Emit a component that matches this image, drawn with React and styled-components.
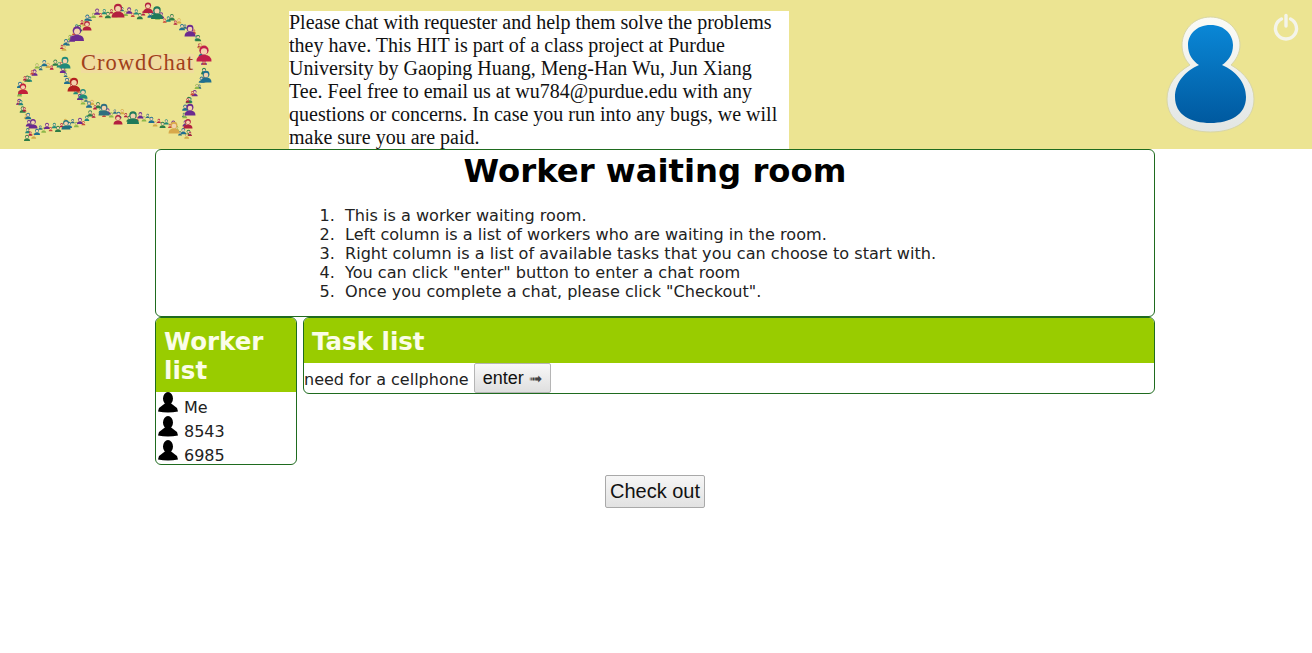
import styled, { createGlobalStyle } from "styled-components";

const GlobalStyle = createGlobalStyle`
html, body {
  margin: 0;
  padding: 0;
  background: #fff;
  font-family: "DejaVu Sans", Verdana, sans-serif;
}
`

const Header = styled.header`
height: 149px;
background: #ece492;
display: flex;
flex-direction: row;
align-items: flex-end;
`

const LogoBox = styled.div`
width: 289px;
height: 149px;
flex-shrink: 0;
`

const Note = styled.p`
width: 500px;
height: 138px;
margin: 0;
background: #fff;
font-family: "Liberation Serif", "Times New Roman", serif;
font-size: 20px;
line-height: 23px;
color: #111;
flex-shrink: 0;
`

const UserArea = styled.div`
flex: 1;
height: 149px;
display: flex;
flex-direction: row;
justify-content: flex-end;
align-items: flex-start;
padding-right: 12px;
gap: 15px;
`

const AvatarWrap = styled.div`
width: 94px;
height: 120px;
margin-top: 15px;
`

const PowerWrap = styled.div`
width: 28px;
height: 28px;
margin-top: 13px;
`

const Main = styled.main`
width: 1000px;
margin-left: 155px;
`

const Intro = styled.section`
box-sizing: border-box;
height: 168px;
border: 1px solid #1f6b1f;
border-radius: 6px;
`

const Title = styled.h1`
margin: 0;
padding-top: 1px;
text-align: center;
font-size: 32.3px;
line-height: 41px;
font-weight: 700;
color: #000;
`

const Steps = styled.ol`
margin: 14px 0 0 0;
padding-left: 189px;
font-size: 16.1px;
line-height: 19px;
color: #222;

li::marker {
  content: counter(list-item) ".  ";
}
`

const Columns = styled.div`
display: flex;
flex-direction: row;
align-items: flex-start;
gap: 6px;
`

const Panel = styled.section`
box-sizing: border-box;
border: 1px solid #1f6b1f;
border-radius: 6px;
overflow: hidden;
width: ${(p) => p.$width};
height: ${(p) => p.$height};
flex-shrink: 0;
`

const PanelTitle = styled.h2`
margin: 0;
padding: 9px 8px 7px;
background: #99cc00;
color: #fbfde8;
font-size: 24.5px;
line-height: 29px;
font-weight: 700;
`

const WorkerRow = styled.div`
display: flex;
flex-direction: row;
align-items: flex-start;
height: 24px;
padding-left: 2px;
gap: 6px;
font-size: 16px;
line-height: 19px;
color: #222;

span {
  padding-top: 6px;
}
`

const TaskRow = styled.div`
display: flex;
flex-direction: row;
align-items: center;
height: 30px;
font-size: 16px;
color: #222;

span.label {
  padding-top: 2px;
}
`

const EnterButton = styled.button`
box-sizing: border-box;
width: 77px;
height: 30px;
margin-left: 5px;
padding: 1px 0 0;
border: 1px solid #b5b5b5;
border-radius: 2px;
background: linear-gradient(#f8f8f8, #dfdfdf);
font-family: "Liberation Sans", Arial, sans-serif;
font-size: 18px;
color: #111;
`

const Arrow = styled.span`
font-size: 16px;
color: #444;
`

const Footer = styled.div`
display: flex;
justify-content: center;
margin-top: 10px;
`

const CheckoutButton = styled.button`
box-sizing: border-box;
width: 100px;
height: 33px;
padding: 0;
border: 1px solid #a9a9a9;
border-radius: 2px;
background: linear-gradient(#f6f6f6, #e2e2e2);
font-family: "Liberation Sans", Arial, sans-serif;
font-size: 20px;
color: #111;
`

const palette = ["#b3203f", "#1f8a7a", "#6b2a8f", "#2f6f7f", "#d2ac48", "#2d7d46", "#c9483a", "#8fb84a", "#1f6f8f"]

// points of the two speech bubbles, in logo pixels
const bigBubble = [[65, 50], [77, 33], [93, 16], [118, 12], [157, 14], [182, 23], [200, 37], [207, 57], [207, 80], [193, 97], [187, 113], [190, 128], [193, 136], [173, 125], [147, 118], [107, 112], [83, 97], [70, 78], [63, 63]]
const smallBubble = [[62, 63], [40, 68], [23, 87], [22, 103], [33, 120], [30, 136], [50, 128], [83, 122], [100, 113]]

const bigPeople = [
  [118, 11, 6.5, "#b3203f"], [157, 13, 6, "#1f7a5a"], [77, 34, 7, "#6b2a8f"], [204, 54, 7.5, "#c21f4a"],
  [206, 77, 5.5, "#1f6f8f"], [74, 85, 6.5, "#b3201f"], [133, 118, 6, "#1f7a5a"], [104, 110, 5.5, "#2f6f7f"],
  [190, 110, 5.5, "#6b2a8f"], [65, 63, 5.5, "#1f8a7a"], [23, 89, 5, "#c21f3a"], [174, 128, 5.5, "#d8a84a"],
  [148, 8, 5, "#b3203f"], [190, 31, 5.5, "#6b2a8f"], [87, 26, 4.5, "#b3203f"], [83, 94, 4.5, "#1f8a7a"],
  [118, 120, 4.5, "#b3203f"], [33, 124, 4.5, "#6b2a8f"], [66, 125, 4.5, "#1f6f7f"], [188, 124, 4.5, "#b3203f"],
]

function walk(points, step) {
  const out = []
  for (let i = 0; i < points.length - 1; i++) {
    const [x1, y1] = points[i]
    const [x2, y2] = points[i + 1]
    const n = Math.max(1, Math.round(Math.hypot(x2 - x1, y2 - y1) / step))
    for (let k = 0; k < n; k++) {
      const t = k / n
      out.push([x1 + (x2 - x1) * t, y1 + (y2 - y1) * t])
    }
  }
  return out
}

function Person({ x, y, r, color }) {
  return (
    <g fill={color}>
      <circle cx={x} cy={y - r * 0.5} r={r * 0.62} />
      <circle cx={x} cy={y - r * 0.35} r={r * 0.42} fill="#f3d2ad" />
      <path d={`M${x - r} ${y + r}Q${x - r} ${y + r * 0.1} ${x} ${y + r * 0.1}Q${x + r} ${y + r * 0.1} ${x + r} ${y + r}Z`} />
    </g>
  )
}

function Logo() {
  const small = [...walk(bigBubble, 3.6), ...walk(smallBubble, 3.6)]
  return (
    <svg width="289" height="149" viewBox="0 0 289 149">
      {small.map(([x, y], i) => (
        <Person
          key={i}
          x={x + ((i * 7) % 7) - 3}
          y={y + ((i * 11) % 7) - 3}
          r={2 + (i % 3) * 0.5}
          color={palette[(i * 4) % palette.length]}
        />
      ))}
      {bigPeople.map(([x, y, r, c], i) => (
        <Person key={i} x={x} y={y} r={r} color={c} />
      ))}
      <rect x="81" y="54" width="113" height="19" fill="#f0dc9e" />
      <text x="81" y="70" fontFamily="Liberation Serif, serif" fontSize="22.5" fill="#a0401a" textLength="112">CrowdChat</text>
    </svg>
  )
}

function Avatar() {
  const outer = "M47.5 2C30 2 19 16 19 30C19 38 22 45 27 50C13 58 4 70 4 84C4 106 24 117 47.5 117C71 117 91 106 91 84C91 70 82 58 68 50C73 45 77 38 77 30C77 16 65 2 47.5 2Z"
  const inner = "M47.5 10C33 10 25 20 25 30C25 40 30 46 36 50C22 56 12 68 12 82C12 100 28 108 47.5 108C67 108 83 100 83 82C83 68 73 56 59 50C65 46 70 40 70 30C70 20 62 10 47.5 10Z"
  return (
    <svg width="94" height="120" viewBox="0 0 94 120">
      <defs>
        <linearGradient id="avatarBlue" x1="0" y1="0" x2="0" y2="1">
          <stop offset="0" stopColor="#0a87d6" />
          <stop offset="1" stopColor="#00599f" />
        </linearGradient>
        <linearGradient id="avatarRim" x1="0" y1="0" x2="0" y2="1">
          <stop offset="0" stopColor="#fbfbf6" />
          <stop offset="1" stopColor="#e2e6e4" />
        </linearGradient>
      </defs>
      <path d={outer} fill="url(#avatarRim)" stroke="#d8d6a8" strokeWidth="1" />
      <path d={inner} fill="url(#avatarBlue)" />
    </svg>
  )
}

function PowerIcon() {
  return (
    <svg width="28" height="28" viewBox="0 0 28 28" fill="none" stroke="#f4f4ea" strokeLinecap="round">
      <path d="M9.5 6A10.5 10.5 0 1 0 18.5 6" strokeWidth="3.4" />
      <path d="M14 2.5V13" strokeWidth="3.4" />
    </svg>
  )
}

function PersonIcon() {
  return (
    <svg width="20" height="21" viewBox="0 0 20 21" fill="#000">
      <ellipse cx="10" cy="6.5" rx="5" ry="6.5" />
      <path d="M7.5 11L1 16L0 19.5Q10 21.5 20 19.5L19 16L12.5 11Z" />
    </svg>
  )
}

const steps = [
  "This is a worker waiting room.",
  "Left column is a list of workers who are waiting in the room.",
  "Right column is a list of available tasks that you can choose to start with.",
  'You can click "enter" button to enter a chat room',
  'Once you complete a chat, please click "Checkout".',
]

const workers = ["Me", "8543", "6985"]

export default function App() {
  return (
    <>
      <GlobalStyle />
      <Header>
        <LogoBox>
          <Logo />
        </LogoBox>
        <Note>
          Please chat with requester and help them solve the problems they have. This HIT is part of a class project at Purdue University by Gaoping Huang, Meng-Han Wu, Jun Xiang Tee. Feel free to email us at wu784@purdue.edu with any questions or concerns. In case you run into any bugs, we will make sure you are paid.
        </Note>
        <UserArea>
          <AvatarWrap>
            <Avatar />
          </AvatarWrap>
          <PowerWrap>
            <PowerIcon />
          </PowerWrap>
        </UserArea>
      </Header>
      <Main>
        <Intro>
          <Title>Worker waiting room</Title>
          <Steps>
            {steps.map((s) => (
              <li key={s}>{s}</li>
            ))}
          </Steps>
        </Intro>
        <Columns>
          <Panel $width="142px" $height="148px">
            <PanelTitle>Worker list</PanelTitle>
            {workers.map((w) => (
              <WorkerRow key={w}>
                <PersonIcon />
                <span>{w}</span>
              </WorkerRow>
            ))}
          </Panel>
          <Panel $width="852px" $height="77px">
            <PanelTitle>Task list</PanelTitle>
            <TaskRow>
              <span className="label">need for a cellphone</span>
              <EnterButton>enter <Arrow>➟</Arrow></EnterButton>
            </TaskRow>
          </Panel>
        </Columns>
        <Footer>
          <CheckoutButton>Check out</CheckoutButton>
        </Footer>
      </Main>
    </>
  )
}
